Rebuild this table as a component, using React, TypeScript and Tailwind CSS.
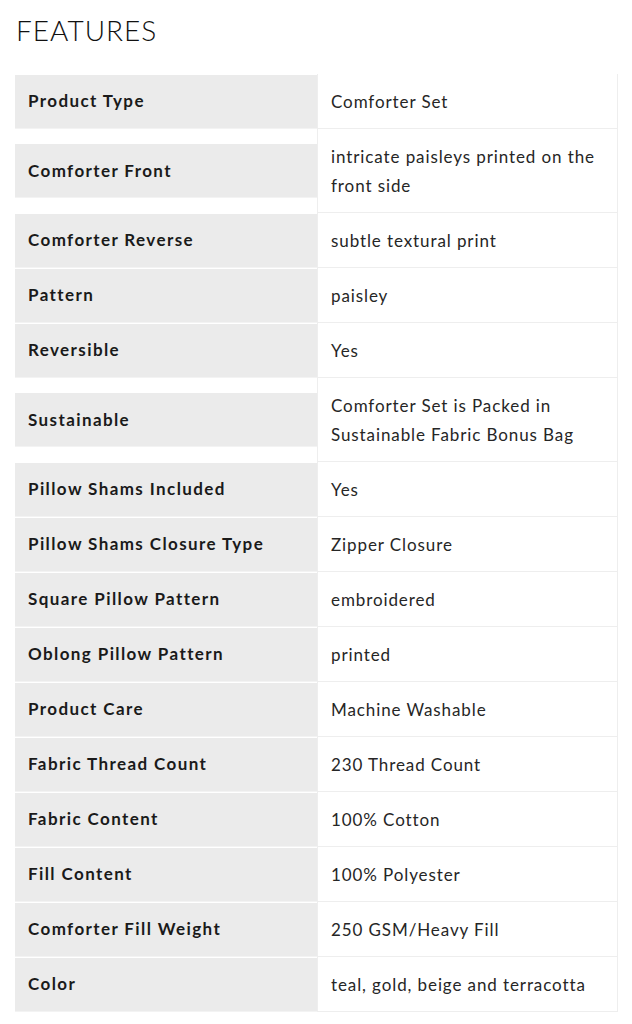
import React from "react";

const rows: [string, string][] = [
  ["Product Type", "Comforter Set"],
  ["Comforter Front", "intricate paisleys printed on the front side"],
  ["Comforter Reverse", "subtle textural print"],
  ["Pattern", "paisley"],
  ["Reversible", "Yes"],
  ["Sustainable", "Comforter Set is Packed in Sustainable Fabric Bonus Bag"],
  ["Pillow Shams Included", "Yes"],
  ["Pillow Shams Closure Type", "Zipper Closure"],
  ["Square Pillow Pattern", "embroidered"],
  ["Oblong Pillow Pattern", "printed"],
  ["Product Care", "Machine Washable"],
  ["Fabric Thread Count", "230 Thread Count"],
  ["Fabric Content", "100% Cotton"],
  ["Fill Content", "100% Polyester"],
  ["Comforter Fill Weight", "250 GSM/Heavy Fill"],
  ["Color", "teal, gold, beige and terracotta"],
];

export default function App() {
  return (
    <div className="w-[632px] h-[1024px] bg-white font-['Lato',sans-serif] overflow-hidden">
      <h2 className="pl-[16px] pt-[14px] text-[28px] leading-[32px] font-light tracking-[1px] text-[#111]">
        FEATURES
      </h2>
      <div className="mt-[28px] ml-[15px] w-[603px] flex flex-col">
        {rows.map(([k, v], i) => (
          <div key={i} className="flex">
            <div className="w-[302px] flex items-center">
              <div className="w-full h-[54px] bg-[#ebebeb] border-b border-[#f3f3f3] pl-[13px] flex items-center text-[17px] font-bold text-[#1a1a1a] tracking-[1.4px]">
                {k}
              </div>
            </div>
            <div className="flex-1 border border-t-0 border-[#eeeeee] pl-[13px] pr-[10px] pt-[13px] pb-[12px] text-[17px] leading-[29px] text-[#262626] tracking-[0.9px]">
              {v}
            </div>
          </div>
        ))}
      </div>
    </div>
  );
}
